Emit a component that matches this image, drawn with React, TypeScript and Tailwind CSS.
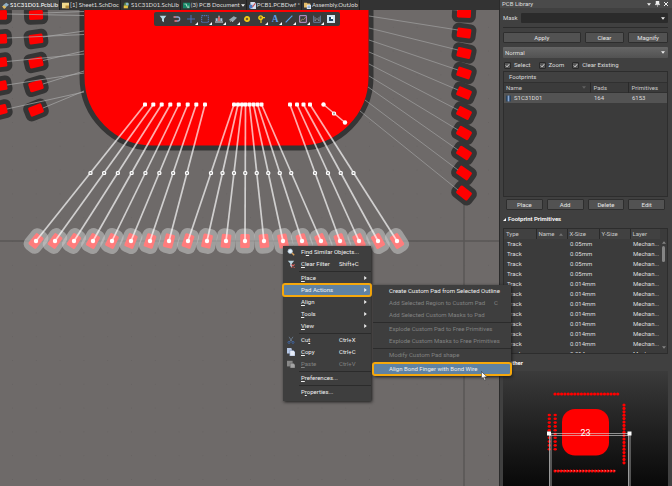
import React, { FC, ReactNode } from 'react';

interface MenuEntry {
    label: string;
    shortcut?: string;
    icon?: ReactNode;
    submenu?: boolean;
    disabled?: boolean;
    active?: boolean;
    separator?: boolean;
}

interface PadProps { x: number; y: number; angle: number }

const SearchIcon = () => (
    <svg viewBox="0 0 10 10" className="size-2">
        <path d="M6 6l3 3" stroke="#d9a05a" strokeWidth="1.8" />
        <circle cx="4" cy="4" r="2.8" fill="#e8f1f8" stroke="#a9c3d8" strokeWidth=".8" />
    </svg>
)

const ClearFilterIcon = () => (
    <svg viewBox="0 0 10 10" className="size-2">
        <path d="M1 1h8L6.200 4.500V9L4 7.500v-3z" fill="#b9d3df" />
        <path d="M5.500 5.500l4 4m0-4l-4 4" stroke="#e0605a" strokeWidth="1.300" />
    </svg>
)

const CutIcon = () => (
    <svg viewBox="0 0 10 10" className="size-2">
        <path d="M2.500 1l4 6M7.500 1l-4 6" stroke="#6f8195" strokeWidth="1" />
        <circle cx="2.500" cy="8" r="1.300" fill="none" stroke="#3f69b0" />
        <circle cx="7.500" cy="8" r="1.300" fill="none" stroke="#3f69b0" />
    </svg>
)

const CopyIcon = () => (
    <svg viewBox="0 0 10 10" className="size-2">
        <path d="M0 0h5l1 1v6H0z" fill="#b7c8e6" />
        <path d="M3.500 3h4.500L10 5v5H3.500z" fill="#e6edf9" stroke="#7189b5" strokeWidth=".6" />
    </svg>
)

const PasteIcon = () => (
    <svg viewBox="0 0 10 10" className="size-2">
        <path d="M0 1h7v7H0z" fill="#888" />
        <path d="M4 4h4l2 2v4H4z" fill="#a5a5a5" stroke="#555" strokeWidth=".6" />
    </svg>
)

const mainMenu: MenuEntry[] = [
    { label: "Fi&nd Similar Objects...", icon: <SearchIcon /> },
    { label: "&Clear Filter", shortcut: "Shift+C", icon: <ClearFilterIcon /> },
    { label: "&Place", submenu: true, separator: true },
    { label: "Pad Actions", submenu: true, active: true },
    { label: "&Align", submenu: true },
    { label: "&Tools", submenu: true },
    { label: "&View", submenu: true },
    { label: "Cu&t", shortcut: "Ctrl+X", icon: <CutIcon />, separator: true },
    { label: "&Copy", shortcut: "Ctrl+C", icon: <CopyIcon /> },
    { label: "&Paste", shortcut: "Ctrl+V", icon: <PasteIcon />, disabled: true },
    { label: "&Preferences...", separator: true },
    { label: "P&roperties...", separator: true },
]

const padMenu: MenuEntry[] = [
    { label: "Create Custom Pad from Selected Outline" },
    { label: "Add Selected Region to Custom Pad", shortcut: "C", disabled: true },
    { label: "Add Selected Custom Masks to Pad", disabled: true },
    { label: "Explode Custom Pad to Free Primitives", disabled: true, separator: true },
    { label: "Explode Custom Masks to Free Primitives", disabled: true },
    { label: "Modify Custom Pad shape", disabled: true, separator: true },
    { label: "Align Bond Finger with Bond Wire", active: true, separator: true },
]

// "&" marks the access key of a menu entry
const MenuLabel: FC<{ text: string }> = ({ text }) => {
    const at = text.indexOf("&")
    if (at < 0) return <span>{text}</span>
    return <span>{text.slice(0, at)}<u>{text[at + 1]}</u>{text.slice(at + 2)}</span>
}

const Menu: FC<{ entries: MenuEntry[], className: string, rowClass: string, shortcutClass: string }> = ({ entries, className, rowClass, shortcutClass }) => (
    <div role="menu" className={`absolute bg-[#3e3e3e] shadow-[1px_1px_3px_#1a1a1a] ${className}`}>
        {entries.map((e) => (
            <React.Fragment key={e.label}>
                {e.separator && <div className={`h-[2px] border-b border-[#2b2b2b] ${rowClass === "pl-4" ? "" : "ml-4"}`} />}
                <button role="menuitem" disabled={e.disabled}
                    className={`relative flex h-3 w-full items-center text-left ${rowClass} ${e.disabled ? "text-[#828282]" : "text-[#f0f0f0]"} ${e.active ? "rounded-[2px] bg-[#5f82a3] outline-2 -outline-offset-1 outline-[#f5a80c]" : ""}`}>
                    {e.icon && <span className="absolute left-1">{e.icon}</span>}
                    <MenuLabel text={e.label} />
                    {e.shortcut && <span className={`absolute ${shortcutClass}`}>{e.shortcut}</span>}
                    {e.submenu && <svg viewBox="0 0 4 6" className="absolute right-1 h-1 w-[3px]"><path d="M0 0l4 3-4 3z" fill="#eee" /></svg>}
                </button>
            </React.Fragment>
        ))}
    </div>
)

const tabs = [
    {
        name: "S1C31D01.PcbLib", active: true,
        icon: <><path d="M1 5l5-4 4 3-5 4z" fill="#8fb0c8" /><path d="M0 6l4-1 2 3-3 2z" fill="#e1b95c" /></>
    },
    { name: "[1] Sheet1.SchDoc", icon: <><path d="M0 1h10v8H0z" fill="#f0d78b" /><path d="M5 5h5v4H5z" fill="#b98e3c" /></> },
    { name: "S1C31D01.SchLib", icon: <><circle cx="5" cy="4" r="3.500" fill="#5c8a54" /><path d="M1 5h6v4H1z" fill="#e6c343" /><circle cx="6" cy="3" r="2" fill="#87b7d6" /></> },
    { name: "(3) PCB Document", arrow: true, icon: <><path d="M0 1h10v8H0z" fill="#168767" /><path d="M2 3h3v3h4M6 8h3" fill="none" stroke="#d4eddf" /></> },
    { name: "PCB1.PCBDwf *", icon: <><path d="M2 0h6l2 2v8H2z" fill="#d5deef" /><path d="M0 4h5v5H0z" fill="#4d79c4" /><path d="M5 7l4-5" stroke="#d34b4b" strokeWidth="1.500" /></> },
    { name: "Assembly.OutJob", icon: <><path d="M0 1h4l1 1h4v6H0z" fill="#e6bd69" /><path d="M4 4h6v6H4z" fill="#e3ebf7" /><path d="M5 6h4M5 8h4" stroke="#5480b8" /></> },
]

const Tabs = () => (
    <nav className="flex h-[10px] shrink-0 bg-[#333] font-['Lato','Roboto',sans-serif] text-[#dedede]">
        {tabs.map((t) => (
            <button key={t.name} className={`flex items-center gap-[1px] border-r border-[#202020] pr-[1px] pl-[2px] whitespace-nowrap ${t.active ? "bg-[#484848] text-white" : ""}`}>
                <svg viewBox="0 0 10 10" className="size-[7px]">{t.icon}</svg>
                <span>{t.name}</span>
                {t.arrow && <svg viewBox="0 0 6 4" className="h-[3px] w-1"><path d="M0 0h6L3 4z" fill="#eee" /></svg>}
            </button>
        ))}
    </nav>
)

const tools = [
    { name: "Filter", icon: <path d="M1 1h10L7.500 5.500V11l-3-2V5.500z" fill="#b4d8e4" /> },
    { name: "Snap", icon: <><path d="M1 3h6a3 3 0 010 6H3" fill="none" stroke="#8ea4cc" strokeWidth="2" /><path d="M1 3h3M2 9h4" stroke="#d06a70" strokeWidth="2" /></> },
    { name: "Move", menu: true, icon: <path d="M6 0v12M0 6h12" stroke="#4a6cb5" strokeWidth="1.600" /> },
    { name: "Select area", menu: true, icon: <path d="M1 1h10v10H1z" fill="none" stroke="#5678c4" strokeWidth="1.500" strokeDasharray="2 1" /> },
    { name: "Align", menu: true, icon: <><path d="M0 10.500h12M6 1v8" stroke="#e4ecf4" strokeWidth="1.400" /><path d="M1 5h3v4H1zM8 5h3v4H8z" fill="#a9c3de" /><path d="M4.500 3h3v6h-3z" fill="#d26767" /></> },
    { name: "Component", menu: true, icon: <><path d="M0 7l7-5 5 2-6 6z" fill="#93a5ae" /><path d="M1 8l2 2M4 9l2 1" stroke="#ddd" /></> },
    { name: "Pad", icon: <circle cx="6" cy="6" r="3.200" fill="#77602c" stroke="#f4cb19" strokeWidth="2.600" /> },
    { name: "Via", menu: true, icon: <><circle cx="5.500" cy="4" r="2.700" fill="#786432" stroke="#f4cb19" strokeWidth="2.200" /><path d="M6 6v6M8 4h4" stroke="#f4cb19" strokeWidth="1.700" /></> },
    { name: "String", menu: true, icon: <text x="6" y="11" textAnchor="middle" fontSize="14" fontWeight="700" fontFamily="Liberation Serif, serif" fill="#5c9fec">A</text> },
    { name: "Line", menu: true, icon: <path d="M1 11L11 1" stroke="#5ba2f0" strokeWidth="1.800" /> },
    { name: "Rule", menu: true, icon: <><path d="M1 1h10v10H1z" fill="none" stroke="#c596d0" strokeWidth="1.500" /><path d="M2 10l3-4 2 1 3-4" fill="none" stroke="#c9a26b" /></> },
    { name: "Room", menu: true, icon: <><path d="M1 1v10h10V1" fill="none" stroke="#6b82a6" strokeWidth="1.400" /><path d="M3 3v6l3-4 3 4V3" fill="none" stroke="#929fac" /></> },
    { name: "Region", icon: <><path d="M0 0h12v12H0z" fill="#d4e7f5" /><path d="M3 3h6v6H3z" fill="#244768" /><path d="M6 3h3v3H6z" fill="#fff" /></> },
]

const Toolbar = () => (
    <div role="toolbar" className="absolute top-[12px] left-[154px] flex h-[14px] items-center rounded-[2px] bg-[#3b3b3b] px-[2px]">
        {tools.map((t) => (
            <button key={t.name} aria-label={t.name} className="relative flex h-3 w-[14px] items-center justify-center">
                <svg viewBox="0 0 12 12" className="size-2">{t.icon}</svg>
                {t.menu && <svg viewBox="0 0 4 4" className="absolute right-0 bottom-0 size-[3px]"><path d="M4 0v4H0z" fill="#fff" /></svg>}
            </button>
        ))}
    </div>
)

const leftPads = [
    { y: 15, inner: -1, outer: -3, toA: 15.5, toB: 11.5 },
    { y: 39, inner: -4, outer: -8, toA: 34.5, toB: 31 },
    { y: 62.500, inner: -7, outer: -13, toA: 54, toB: 51 },
    { y: 86, inner: -10, outer: -17, toA: 73, toB: 71 },
    { y: 110, inner: -14, outer: -22, toA: 92, toB: 91 },
]

const rightPads = [
    { y: 13, angle: 3, fromX: 369, fromY: 4 },
    { y: 33, angle: 8, fromX: 369, fromY: 16 },
    { y: 53, angle: 13, fromX: 369, fromY: 28 },
    { y: 73, angle: 18, fromX: 369, fromY: 40 },
    { y: 93, angle: 23, fromX: 369, fromY: 52 },
    { y: 113, angle: 27, fromX: 369, fromY: 64 },
    { y: 133, angle: 30, fromX: 369, fromY: 76 },
    { y: 153, angle: 33, fromX: 368, fromY: 87 },
    { y: 173, angle: 35, fromX: 365, fromY: 100 },
    { y: 193, angle: 38, fromX: 360, fromY: 111 },
]

const wireStarts = [
    145, 153.3, 161.7, 170.3, 178.8, 187.7, 196.3, 205,
    234, 238, 242, 245.5, 249.5, 253.5, 257.5, 261.5,
    290, 297, 303.5, 310,
]
const wires = wireStarts.map((x, i) => ({ x, padX: 36 + i * 19 }))

const Pad: FC<PadProps> = ({ x, y, angle }) => (
    <g transform={`translate(${x} ${y}) rotate(${angle})`}>
        <rect x="-12" y="-9.500" width="24" height="19" rx="6" fill="#353535" />
        <rect x="-7" y="-4.800" width="14" height="9.600" rx="1.500" fill="#f00" />
    </g>
)

const Node: FC<{ x: number, y: number }> = ({ x, y }) => (
    <rect x={x - 1.5} y={y - 1.5} width="3" height="3" rx="1" fill="#999" stroke="#fff" strokeWidth="1.200" />
)

const Board = () => (
    <svg viewBox="0 10 499 476" preserveAspectRatio="xMinYMin slice" className="min-h-0 w-full flex-1 bg-[#6e6a69]">
        <defs>
            <pattern id="grid" x="12" y="3" width="23.800" height="23.800" patternUnits="userSpaceOnUse">
                <rect width="1" height="1" fill="#676362" />
            </pattern>
        </defs>
        <rect y="10" width="499" height="476" fill="url(#grid)" />
        <path d="M0 241h499M464 200v286" stroke="#5a5756" strokeWidth="1.500" />
        <rect x="82" y="-100" width="289" height="248" rx="71" fill="#f00" stroke="#353535" strokeWidth="5" />

        {leftPads.map((p) => (
            <g key={p.y}>
                <Pad x={0} y={p.y} angle={p.inner} />
                <Pad x={36} y={p.y} angle={p.outer} />
                <path d={`M7 ${p.y - 1}L84 ${p.toA}M43 ${p.y - 2}L84 ${p.toB}`} stroke="#aaa" strokeWidth=".7" />
            </g>
        ))}
        {rightPads.map((p) => <Pad key={p.y} x={464} y={p.y} angle={p.angle} />)}
        {rightPads.map((p) => <path key={p.y} d={`M${p.fromX} ${p.fromY}L458 ${p.y - 3}`} stroke="#a0a0a0" strokeWidth=".7" />)}

        {wires.map((w) => (
            <g key={w.x} transform={`translate(${w.padX} 241) rotate(${Math.atan2(w.x - w.padX, 136.5) * 180 / Math.PI})`}>
                <rect x="-9.500" y="-12.500" width="19" height="25" rx="7" fill="#c8c8c8" fillOpacity=".55" />
                <rect x="-4.800" y="-7" width="9.600" height="14" rx="1.500" fill="#ff7d7d" />
            </g>
        ))}
        {wires.map((w) => (
            <g key={w.x}>
                <path d={`M${w.x} 104.500L${w.padX} 241`} stroke="#fff" strokeOpacity=".68" strokeWidth="1.700" />
                <rect x={w.x - 2} y="102.500" width="4" height="4" rx="1" fill="#fff" />
                <Node x={(w.x + w.padX) / 2} y={173} />
                <circle cx={w.padX} cy="241" r="2.200" fill="#fff" />
            </g>
        ))}
        <path d="M323.500 104.500L345 122.500" stroke="#ffb3b3" strokeWidth="1.500" />
        <circle cx="323.500" cy="104.500" r="2.200" fill="#fff" />
        <circle cx="345" cy="122.500" r="2.200" fill="#fff" />
        <Node x={334} y={113.5} />
    </svg>
)

const btn = "h-[11px] rounded-[1px] border border-[#2e2e2e] bg-[#525252] text-center leading-[9px] text-[#e6e6e6]"

const primitives = ["0.05mm", "0.05mm", "0.05mm", "0.05mm", "0.014mm", "0.014mm", "0.014mm", "0.014mm", "0.014mm", "0.014mm", "0.014mm", "0.014mm"]

const Option: FC<{ label: string }> = ({ label }) => (
    <label className="flex items-center gap-[3px]">
        <span className="relative flex size-[7px]">
            <input type="checkbox" defaultChecked className="size-[7px] appearance-none rounded-[1px] border border-[#292929] bg-[#555]" />
            <svg viewBox="0 0 8 8" className="pointer-events-none absolute size-[7px]"><path d="M2 4l1.500 1.500L6 2.500" fill="none" stroke="#eee" /></svg>
        </span>
        {label}
    </label>
)

const Arrow: FC<{ className: string }> = ({ className }) => (
    <svg viewBox="0 0 6 4" className={`pointer-events-none h-[3px] w-1 ${className}`}><path d="M0 0h6L3 4z" fill="#eee" /></svg>
)

const range = (from: number, to: number, step: number) =>
    Array.from({ length: Math.floor((to - from) / step) + 1 }, (_, i) => from + i * step)

const Preview = () => (
    <div className="min-h-0 flex-1 bg-linear-to-b from-[#3b3b3b] to-[#090909]">
        <svg viewBox="503 371 165 115" preserveAspectRatio="xMinYMin slice" className="h-full w-full">
            <rect x="562" y="409" width="47" height="46.500" rx="13" fill="#f00" />
            {range(555, 618, 3.3).map((x) => <circle key={x} cx={x} cy="394" r="1.600" fill="#f00" />)}
            {range(405, 464, 3.4).map((y) => <circle key={y} cx="624" cy={y} r="1.600" fill="#f00" />)}
            {range(415, 451, 3.8).map((y) => <g key={y} fill="#f00"><ellipse cx="549.300" cy={y} rx="1.700" ry="1.300" /><ellipse cx="555.200" cy={y} rx="1.700" ry="1.300" /></g>)}
            {range(555, 614, 3.1).map((x) => <g key={x}><circle cx={x} cy="471" r="1.500" fill="#f00" /><circle cx={x + 1} cy="470.700" r=".5" fill="#fbb" /></g>)}
            <path d="M549 433.500h80M549 435.500h80" stroke="#ddd" strokeOpacity=".6" />
            <path d="M549.500 434v52M551 434v52M628.500 434v52M630 434v52" stroke="#aaa" strokeWidth=".9" />
            <path d="M547 431.500h4v4h-4zM627.500 431.500h4v4h-4z" fill="#fff" />
            <text x="585.500" y="436" textAnchor="middle" fontSize="9" fill="#fff">23</text>
        </svg>
    </div>
)

const Panel = () => (
    <aside className="flex w-[173px] shrink-0 flex-col border-l border-[#2b2b2b] bg-[#404040] pr-1 pl-[3px] text-[#dedede]">
        <header className="-mr-1 -ml-[3px] flex h-2 shrink-0 items-center bg-[#4a4a4a] pr-1 pl-[2px]">
            <h1 className="flex-1">PCB Library</h1>
            <div className="flex items-center gap-1">
                <button aria-label="Options"><Arrow className="" /></button>
                <button aria-label="Pin"><svg viewBox="0 0 6 8" className="h-[6px] w-[5px]"><path d="M1 0h4v4h1v1H0V4h1zM3 5v3" fill="#eee" stroke="#eee" strokeWidth=".6" /></svg></button>
                <button aria-label="Close"><svg viewBox="0 0 6 6" className="size-1"><path d="M0 0l6 6M6 0L0 6" stroke="#eee" strokeWidth="1.500" /></svg></button>
            </div>
        </header>
        <div className="flex h-5 shrink-0 items-center gap-[3px] border-b border-[#2c2c2c]">
            <label htmlFor="mask">Mask</label>
            <span className="relative flex-1">
                <input id="mask" className="block h-[10px] w-full rounded-[1px] bg-[#2b2b2b]" />
                <Arrow className="absolute top-1 right-[3px]" />
            </span>
        </div>
        <div className="mt-1 flex shrink-0 gap-1">
            <button className={`flex-2 ${btn}`}>Apply</button>
            <button className={`flex-1 ${btn}`}>Clear</button>
            <button className={`flex-1 ${btn}`}>Magnify</button>
        </div>
        <div className="relative mt-1 shrink-0">
            <select aria-label="Mode" className="block h-[11px] w-full appearance-none rounded-[1px] bg-linear-to-b from-[#666] to-[#525252] pl-[2px]">
                <option>Normal</option>
            </select>
            <Arrow className="absolute top-1 right-[3px]" />
        </div>
        <div className="mt-[1px] flex h-3 shrink-0 items-center gap-2 pl-[1px]">
            <Option label="Select" />
            <Option label="Zoom" />
            <Option label="Clear Existing" />
        </div>
        <section className="h-[126px] shrink-0 border border-[#2d2d2d] bg-[#3b3b3b]">
            <h2 className="h-[10px] bg-[#414141] pl-[5px] leading-[10px]">Footprints</h2>
            <table className="w-full table-fixed text-left">
                <thead>
                    <tr className="h-[10px] border-y border-[#303030] leading-2 text-[#cacaca]">
                        <th className="w-[86px] pl-[2px] font-normal"><span className="flex items-center justify-between pr-1">Name <Arrow className="opacity-20" /></span></th>
                        <th className="border-l border-[#292929] pl-[3px] font-normal">Pads</th>
                        <th className="w-[39px] border-l border-[#292929] pl-[3px] font-normal">Primitives</th>
                    </tr>
                </thead>
                <tbody>
                    <tr className="h-[10px] bg-[#535353] leading-[10px]">
                        <td className="pl-[2px]">
                            <span className="flex items-center gap-[3px]">
                                <svg viewBox="0 0 6 7" className="h-[7px] w-[5px]"><path d="M0 0h6v7H0z" fill="#29435f" /><path d="M2 0h2v7H2z" fill="#8ba9d4" /></svg>
                                S1C31D01
                            </span>
                        </td>
                        <td className="pl-1">164</td>
                        <td className="pl-1">6153</td>
                    </tr>
                </tbody>
            </table>
        </section>
        <div className="mt-[2px] flex shrink-0 gap-1 px-[3px]">
            {["Place", "Add", "Delete", "Edit"].map((b) => <button key={b} className={`flex-1 ${btn}`}>{b}</button>)}
        </div>
        <h2 className="flex h-[18px] shrink-0 items-center gap-[2px] font-semibold text-white">
            <svg viewBox="0 0 4 4" className="size-[3px]"><path d="M4 0v4H0z" fill="#fff" /></svg>
            Footprint Primitives
        </h2>
        <div className="flex h-[126px] shrink-0 overflow-hidden border border-[#2d2d2d] bg-[#3b3b3b]">
            <table className="h-max flex-1 table-fixed text-left">
                <thead>
                    <tr className="h-[10px] bg-[#414141] leading-[10px] text-[#cacaca]">
                        <th className="w-8 pl-[2px] font-normal">Type</th>
                        <th className="w-[31px] border-l border-[#292929] pl-[2px] font-normal"><span className="flex items-center justify-between pr-1">Name <Arrow className="rotate-180 opacity-30" /></span></th>
                        <th className="w-8 border-l border-[#292929] pl-[2px] font-normal">X-Size</th>
                        <th className="w-[31px] border-l border-[#292929] pl-[2px] font-normal">Y-Size</th>
                        <th className="border-l border-[#292929] pl-[2px] font-normal">Layer</th>
                    </tr>
                </thead>
                <tbody>
                    {primitives.map((size, i) => (
                        <tr key={i} className="h-[10px] leading-[10px]">
                            <td className="pl-[3px]">Track</td>
                            <td></td>
                            <td className="pl-[3px]">{size}</td>
                            <td></td>
                            <td className="pl-[3px]">Mechan...</td>
                        </tr>
                    ))}
                </tbody>
            </table>
            <div className="flex w-[7px] flex-col items-center pt-3">
                <Arrow className="rotate-180 opacity-40" />
                <div className="mt-[2px] h-4 w-[3px] rounded bg-[#858585]" />
                <Arrow className="mt-auto mb-1 opacity-40" />
            </div>
        </div>
        <h2 className="flex h-[17px] shrink-0 items-center gap-[2px] font-semibold text-white">
            <svg viewBox="0 0 4 4" className="size-[3px]"><path d="M4 0v4H0z" fill="#fff" /></svg>
            Other
        </h2>
        <Preview />
    </aside>
)

const App = () => {
    return (
        <div className="relative flex h-screen overflow-hidden bg-[#404040] font-['Roboto','Noto_Sans',sans-serif] text-[6px] leading-2">
            <main className="relative flex min-w-0 flex-1 flex-col">
                <Tabs />
                <Board />
                <Toolbar />
            </main>
            <Panel />
            <Menu entries={mainMenu} className="top-[246px] left-[283px] w-[88px] pb-[3px]" rowClass="pl-[18px]" shortcutClass="left-14" />
            <Menu entries={padMenu} className="top-[285px] left-[373px] w-[138px] pb-[1px]" rowClass="pl-4" shortcutClass="right-[13px]" />
            <svg viewBox="0 0 8 11" className="absolute top-[371px] left-[481px] h-[10px] w-[7px]">
                <path d="M0.500 0.500v8l2-1.500 1.500 3.500 1.500-.7L4 6.500h3z" fill="#fff" stroke="#222" strokeWidth=".6" />
            </svg>
        </div>
    )
}

export default App
